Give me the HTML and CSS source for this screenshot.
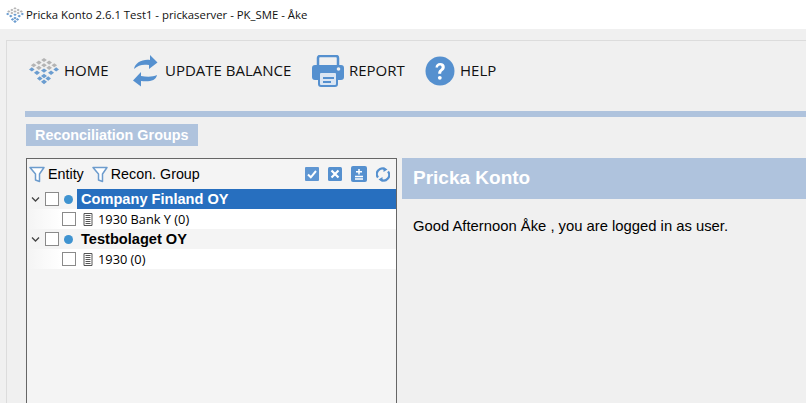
FILE: index.html
```html
<!DOCTYPE html>
<html lang="en">
<head>
<meta charset="utf-8">
<title>Pricka Konto</title>
<link rel="stylesheet" href="styles.css">
</head>
<body>
<svg width="0" height="0" class="defs">
  <defs>
    <g id="logo">
      <path fill="#b4b4b4" d="M16 0l3 2.200-3 2.200-3-2.200zM10.500 2.800l3 2.200-3 2.200-3-2.200zM21.500 2.800l3 2.200-3 2.200-3-2.200zM5 5.600l3 2.200-3 2.200-3-2.200zM16 5.600l3 2.200-3 2.200-3-2.200zM27 5.600l3 2.200-3 2.200-3-2.200zM10.500 8.400l3 2.200-3 2.200-3-2.200zM21.500 8.400l3 2.200-3 2.200-3-2.200z"/>
      <path fill="#6b9dd0" d="M3 10l3 2.300-3 2.300-3-2.300zM29 10l3 2.300-3 2.300-3-2.300zM16 11.200l3.200 2.300-3.200 2.300-3.200-2.300zM8.500 13.500l3.200 2.400-3.200 2.400-3.200-2.400zM23.500 13.500l3.200 2.400-3.200 2.400-3.200-2.400zM16 17l3.200 2.400-3.200 2.400-3.200-2.400zM11.500 19.500l3 2.400-3 2.400-3-2.400zM20.500 19.500l3 2.400-3 2.400-3-2.400zM16 23l3.200 2.500-3.200 2.500-3.200-2.500z"/>
    </g>
    <g id="funnel">
      <path d="M1 1.500h14L10.500 8v7.500L6.500 14V8z" fill="#fff" stroke="#6d9ccd" stroke-width="1.500" stroke-linejoin="round"/>
    </g>
    <path id="doc" d="M1 .5h8v12H1zM2.500 2.500h5M2.500 4.500h5M2.500 6.500h5M2.500 8.500h5M2.500 10.500h5" fill="#fff" stroke="#555" stroke-width="1"/>
    <path id="chev" d="M1 1.500l3.500 3.500L8 1.500" fill="none" stroke="#444" stroke-width="1.300"/>
  </defs>
</svg>
<header class="titlebar">
  <svg class="title-icon" width="18" height="16" viewBox="0 0 32 28"><use href="#logo"/></svg>
  <span>Pricka Konto 2.6.1 Test1 - prickaserver - PK_SME - Åke</span>
</header>
<main class="window">
  <nav class="toolbar">
    <a class="tool tool-home">
      <svg width="30" height="28" viewBox="0 0 32 28"><use href="#logo"/></svg>
      <span>HOME</span>
    </a>
    <a class="tool tool-update">
      <svg width="25" height="33" viewBox="0 0 25 33">
        <path d="M1 15C2 9 9 5 17 6V1l7.500 7.500L16 15v-4C10 10 5 11 1 15z" fill="#5590cf"/>
        <path d="M24 21c-1 6-8 7-16 6v5.500L0 26.500 8 18v4c6 1 12 1 16-1z" fill="#5590cf"/>
      </svg>
      <span>UPDATE BALANCE</span>
    </a>
    <a class="tool tool-report">
      <svg width="32" height="32" viewBox="0 0 32 32">
        <path d="M6 11V3a2 2 0 0 1 2-2h16a2 2 0 0 1 2 2v8" fill="none" stroke="#5590cf" stroke-width="2.500"/>
        <path d="M3 10h26a3 3 0 0 1 3 3v9a3 3 0 0 1-3 3h-3v-6H6v6H3a3 3 0 0 1-3-3v-9a3 3 0 0 1 3-3z" fill="#5590cf"/>
        <circle cx="26.500" cy="14" r="1.800" fill="#efefef"/>
        <rect x="7" y="17" width="18" height="14" rx="2" fill="#dbe6f3" stroke="#5590cf" stroke-width="2"/>
        <path d="M11 22h11v2H11zM11 26h8v2h-8z" fill="#5590cf"/>
      </svg>
      <span>REPORT</span>
    </a>
    <a class="tool tool-help">
      <svg width="30" height="30" viewBox="0 0 30 30">
        <circle cx="15" cy="15" r="14.500" fill="#5590cf"/>
        <path d="M10.500 11.500C10.700 8.500 12.500 7 15.200 7c2.800 0 4.600 1.600 4.600 4 0 2-1 3-2.300 4-1 .8-1.300 1.400-1.300 2.700h-3c0-2.200.5-3.200 1.900-4.300 1-.8 1.500-1.300 1.500-2.300 0-1-.6-1.700-1.700-1.700-1.200 0-1.800.8-1.900 2.100z" fill="#fff"/>
        <circle cx="14.800" cy="21.800" r="1.900" fill="#fff"/>
      </svg>
      <span>HELP</span>
    </a>
  </nav>
  <div class="rule"></div>
  <h2 class="section-label">Reconciliation Groups</h2>
  <div class="columns">
    <section class="tree-panel">
      <div class="tree-tools">
        <span class="filter filter-entity"><svg width="16" height="17" viewBox="0 0 16 17"><use href="#funnel"/></svg>Entity</span>
        <span class="filter"><svg width="16" height="17" viewBox="0 0 16 17"><use href="#funnel"/></svg>Recon. Group</span>
        <span class="tree-actions">
          <svg width="14" height="14" viewBox="0 0 14 14"><rect width="14" height="14" rx="1" fill="#5f96d2"/><path d="M3 7.500l2.800 2.800L11 4" fill="none" stroke="#fff" stroke-width="2"/></svg>
          <svg width="14" height="14" viewBox="0 0 14 14"><rect width="14" height="14" rx="1.500" fill="#5590cf"/><path d="M3.500 3.500l7 7M10.500 3.500l-7 7" stroke="#fff" stroke-width="2.200"/></svg>
          <svg width="16" height="16" viewBox="0 0 16 16"><rect width="16" height="16" rx="2" fill="#5590cf"/><path d="M8 3v5.500M5 5.700h6M4 10.500h8M4 13h8" stroke="#fff" stroke-width="1.500"/></svg>
          <svg width="14" height="15" viewBox="0 0 14 15"><path d="M2 10.500A5.500 5.500 0 0 1 9 2.300M12 4.500a5.500 5.500 0 0 1-7 8.200" fill="none" stroke="#5590cf" stroke-width="2.200"/><path d="M7.500 0l4 2.500-4 2.500zM6.500 10l-4 2.500 4 2.500z" fill="#5590cf"/></svg>
        </span>
      </div>
      <ul class="tree">
        <li class="row row-entity">
          <svg class="chev" width="9" height="6" viewBox="0 0 9 6"><use href="#chev"/></svg>
          <span class="check"></span>
          <span class="dot"></span>
          <span class="label selected">Company Finland OY</span>
        </li>
        <li class="row row-child">
          <span class="check"></span>
          <svg class="doc" width="10" height="13" viewBox="0 0 10 13"><use href="#doc"/></svg>
          <span>1930 Bank Y (0)</span>
        </li>
        <li class="row row-entity">
          <svg class="chev" width="9" height="6" viewBox="0 0 9 6"><use href="#chev"/></svg>
          <span class="check"></span>
          <span class="dot"></span>
          <span class="label">Testbolaget OY</span>
        </li>
        <li class="row row-child">
          <span class="check"></span>
          <svg class="doc" width="10" height="13" viewBox="0 0 10 13"><use href="#doc"/></svg>
          <span>1930 (0)</span>
        </li>
      </ul>
    </section>
    <section class="welcome">
      <h1 class="welcome-title">Pricka Konto</h1>
      <p class="welcome-text">Good Afternoon Åke , you are logged in as user.</p>
    </section>
  </div>
</main>
</body>
</html>
```
FILE: styles.css
```css
* { box-sizing: border-box; }
html, body { margin: 0; padding: 0; height: 403px; overflow: hidden; }
body { background: #f0f0f0; font-family: "Liberation Sans", Arial, sans-serif; color: #000; }
.defs { position: absolute; }
.titlebar { height: 29px; background: #fff; display: flex; align-items: center; gap: 2px; padding-left: 6px; font-family: "Open Sans", sans-serif; font-size: 11.35px; color: #111; }
.window { margin-left: 6px; margin-top: 11px; height: 363px; border-top: 1px solid #dcdcdc; border-left: 1px solid #dcdcdc; padding-left: 18px; display: flex; flex-direction: column; }
.toolbar { display: flex; align-items: center; height: 59px; padding-left: 4px; font-family: "Open Sans", sans-serif; font-size: 15px; color: #111; }
.tool { display: flex; align-items: center; }
.tool span { padding-bottom: 2px; }
.tool-home { gap: 5px; width: 104px; }
.tool-update { gap: 7px; width: 179px; }
.tool-report { gap: 5px; width: 113px; }
.tool-help { gap: 5px; }
.rule { height: 6px; margin-top: 11px; background: #afc3dd; }
.section-label { margin: 7px 0 0 1px; width: 172px; height: 22px; background: #afc3dd; color: #fff; font-size: 14.4px; font-weight: bold; line-height: 22px; padding-left: 9px; }
.columns { display: flex; margin-top: 12px; margin-left: 1px; flex: 1; min-height: 0; }
.tree-panel { width: 371px; border: 1px solid #666; border-bottom: 0; background: #f4f4f4; flex: none; }
.tree-tools { display: flex; align-items: center; height: 30px; padding-left: 2px; font-size: 14.3px; }
.filter { display: flex; align-items: center; gap: 3px; }
.filter-entity { margin-right: 8px; }
.tree-actions { margin-left: auto; display: flex; align-items: center; gap: 9px; padding-right: 6px; }
.tree { list-style: none; margin: 0; padding: 0; }
.row { height: 20px; display: flex; align-items: center; }
.row-entity { background: #f4f4f4; padding-left: 4px; font-weight: bold; font-size: 14.6px; }
.row-child { background: linear-gradient(to right, #f4f4f4, #fff 35px); padding-left: 35px; font-family: "Open Sans", sans-serif; font-size: 12.8px; }
.chev { margin-right: 5px; }
.check { width: 14px; height: 14px; border: 1px solid #8a8a8a; background: #fff; flex: none; }
.dot { width: 9px; height: 9px; border-radius: 50%; background: #3f93d0; margin-left: 5px; margin-right: 4px; }
.label { height: 20px; line-height: 21px; padding-left: 4px; flex: 1; }
.selected { background: #276fbf; color: #fff; }
.doc { margin-left: 7px; margin-right: 5px; }
.welcome { margin-left: 5px; flex: 1; }
.welcome-title { margin: 0; height: 41px; line-height: 39px; background: #afc3dd; color: #fff; font-size: 19px; font-weight: bold; padding-left: 11px; }
.welcome-text { margin: 18px 0 0 11px; font-size: 14.8px; line-height: 18px; }
```
